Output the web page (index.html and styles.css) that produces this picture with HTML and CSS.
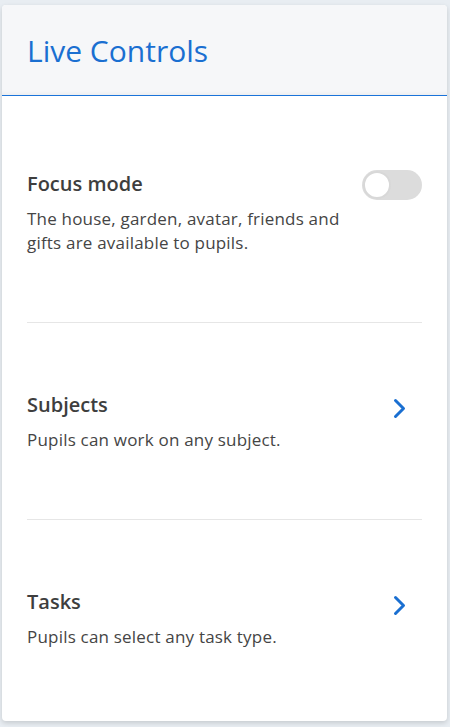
FILE: index.html
```html
<!DOCTYPE html>
<html lang="en">
<head>
    <meta charset="UTF-8">
    <meta name="viewport" content="width=device-width, initial-scale=1.0">
    <title>Live Controls</title>
    <link rel="stylesheet" href="styles.css">
</head>
<body>
    <div class="card">
        <div class="card-header">
            <h1>Live Controls</h1>
        </div>
        <div class="card-body">
            <div class="control">
                <div class="control-text">
                    <h2>Focus mode</h2>
                    <p>The house, garden, avatar, friends and gifts are available to pupils.</p>
                </div>
                <label class="switch">
                    <input type="checkbox">
                    <span class="slider"></span>
                </label>
            </div>
            <div class="control">
                <div class="control-text">
                    <h2>Subjects</h2>
                    <p>Pupils can work on any subject.</p>
                </div>
                <svg class="chevron" width="13" height="21" viewBox="0 0 13 21">
                    <path d="M2.5 2.5 L10.5 10.5 L2.5 18.5" fill="none" stroke="#1a6fd1" stroke-width="3" stroke-linecap="round" stroke-linejoin="round"/>
                </svg>
            </div>
            <div class="control">
                <div class="control-text">
                    <h2>Tasks</h2>
                    <p>Pupils can select any task type.</p>
                </div>
                <svg class="chevron" width="13" height="21" viewBox="0 0 13 21">
                    <path d="M2.5 2.5 L10.5 10.5 L2.5 18.5" fill="none" stroke="#1a6fd1" stroke-width="3" stroke-linecap="round" stroke-linejoin="round"/>
                </svg>
            </div>
        </div>
    </div>
</body>
</html>
```

FILE: styles.css
```css
body {
    font-family: "Open Sans", "Noto Sans", sans-serif;
    margin: 0;
    padding: 5px 3px 6px 2px;
    background-color: #e8edf2;
}

.card {
    background-color: white;
    border-radius: 4px;
    box-shadow: 0 2px 5px rgba(0, 0, 0, 0.15);
    overflow: hidden;
}

.card-header {
    background-color: #f6f7f9;
    border-bottom: 1px solid #1a73d9;
    box-shadow: inset 0 -6px 6px -6px rgba(0, 0, 0, 0.08);
    height: 90px;
    padding: 0 25px;
    display: flex;
    align-items: center;
}

h1 {
    margin: 0;
    font-size: 30px;
    font-weight: normal;
    color: #1a6fd1;
}

.card-body {
    padding: 6px 25px 5px;
}

.control {
    display: flex;
    align-items: flex-start;
    justify-content: space-between;
    padding: 69px 0 67px;
    border-bottom: 1px solid #e6e6e6;
}

.control:last-child {
    border-bottom: none;
}

.control-text {
    max-width: 330px;
}

h2 {
    margin: 0 0 10px;
    font-size: 20px;
    line-height: 26px;
    font-weight: 600;
    color: #3e3e3e;
}

p {
    margin: 0;
    font-size: 17px;
    line-height: 24px;
    letter-spacing: 0.2px;
    color: #454545;
}

.switch {
    position: relative;
    width: 60px;
    height: 30px;
    margin-top: -1px;
}

.switch input {
    display: none;
}

.slider {
    position: absolute;
    inset: 0;
    background-color: #dcdcdc;
    border-radius: 15px;
}

.slider::before {
    content: "";
    position: absolute;
    left: 1px;
    top: 1px;
    width: 24px;
    height: 24px;
    background-color: white;
    border: 2px solid #d8d8d8;
    border-radius: 50%;
}

.chevron {
    margin: 6px 16px 0 0;
}
```
